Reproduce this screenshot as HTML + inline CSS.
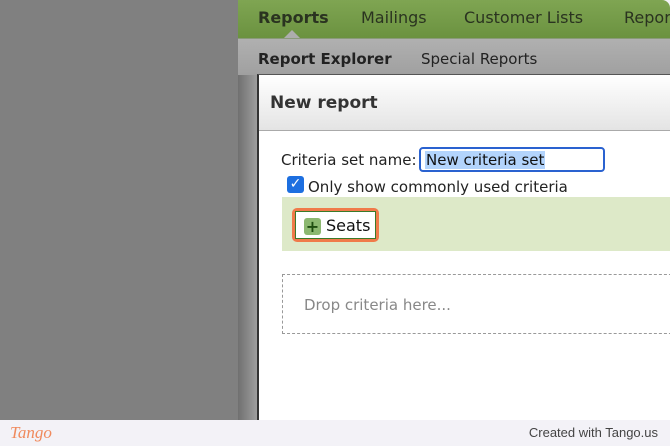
<!DOCTYPE html>
<html><head><style>
*{margin:0;padding:0;box-sizing:border-box}
body{width:670px;height:446px;overflow:hidden;background:#f3f2f7;font-family:"DejaVu Sans","Liberation Sans",sans-serif;position:relative}
.left{position:absolute;left:0;top:0;width:238px;height:420px;background:#808080}
.nav{position:absolute;left:238px;top:0;width:432px;height:38px;background:linear-gradient(#7fa552,#6b9240);border-radius:0 8px 0 0}
.nav span{position:absolute;top:8px;font-size:16px;color:#2a3320}
.sub{position:absolute;left:238px;top:38px;width:432px;height:37px;background:linear-gradient(#b0b0b0,#a0a0a0);border-top:1px solid #8a9a7a}
.sub span{position:absolute;top:11px;font-size:15px;color:#222}
.strip{position:absolute;left:238px;top:75px;width:20px;height:345px;background:linear-gradient(90deg,#707070,#a0a0a0)}
.panel{position:absolute;left:257px;top:74px;width:413px;height:346px;background:#fff;border-left:2px solid #333;border-top:1px solid #555}
.hdr{height:56px;background:linear-gradient(#fff,#e4e4e4);border-bottom:1px solid #aaa}
.hdr b{position:absolute;left:11px;top:18px;font-size:17px;color:#333}
.t{position:absolute;font-size:15px;color:#222}
</style></head><body>
<div class="left"></div>
<div class="nav">
<span style="left:20px;font-weight:bold">Reports</span>
<span style="left:123px">Mailings</span>
<span style="left:226px">Customer Lists</span>
<span style="left:386px">Reports</span>
<div style="position:absolute;left:46px;top:30px;width:0;height:0;border-left:8px solid transparent;border-right:8px solid transparent;border-bottom:8px solid #adadad"></div>
</div>
<div class="sub">
<span style="left:20px;font-weight:bold">Report Explorer</span>
<span style="left:183px">Special Reports</span>
</div>
<div class="strip"></div>
<div class="panel">
<div class="hdr"><b>New report</b></div>
<div class="t" style="left:22px;top:76px">Criteria set name:</div>
<div style="position:absolute;left:160px;top:72px;width:186px;height:25px;border:2px solid #2a62d0;border-radius:4px"><span style="position:absolute;left:4px;top:2px;font-size:15px;background:#b3d4fc;color:#111;padding:0 1px">New criteria set</span></div>
<div style="position:absolute;left:28px;top:101px;width:17px;height:17px;background:#1d6fe0;border-radius:3px;color:#fff;font-size:14px;line-height:17px;text-align:center">✓</div>
<div class="t" style="left:49px;top:103px">Only show commonly used criteria</div>
<div style="position:absolute;left:23px;top:122px;width:390px;height:54px;background:#dde9c8"></div>
<div style="position:absolute;left:33px;top:133px;width:87px;height:34px;border:3px solid #f07a4a;border-radius:5px;background:#fff"><div style="position:absolute;inset:0;border:1px solid #3a7a2a"></div>
<div style="position:absolute;left:9px;top:7px;width:17px;height:17px;background:#8cb870;border-radius:3px;color:#1f4d10;font-weight:bold;font-size:16px;line-height:17px;text-align:center">+</div>
<div style="position:absolute;left:31px;top:5px;font-size:16px;color:#111">Seats</div></div>
<div style="position:absolute;left:23px;top:199px;width:400px;height:60px;border:1px dashed #999"></div>
<div class="t" style="left:45px;top:221px;color:#888">Drop criteria here...</div>
</div>
<div style="position:absolute;left:10px;top:423px;font-family:'Liberation Serif',serif;font-style:italic;color:#f08a5d;font-size:17px">Tango</div>
<div style="position:absolute;right:12px;top:425px;font-family:'Liberation Sans',sans-serif;font-size:13px;color:#444">Created with Tango.us</div>
</body></html>
